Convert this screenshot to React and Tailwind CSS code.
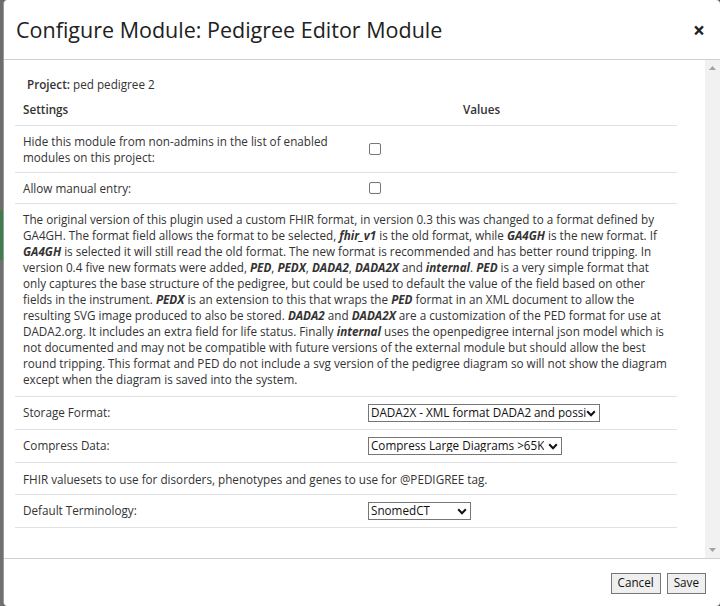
import React from "react";

const font = { fontFamily: '"Open Sans", "Liberation Sans", sans-serif' };

function Chevron() {
  return (
    <svg width="10" height="7" viewBox="0 0 10 7" className="shrink-0">
      <path d="M1.2 1.3 L5 5.2 L8.8 1.3" fill="none" stroke="#111" strokeWidth="2" />
    </svg>
  );
}

function FakeSelect({ value, width }) {
  return (
    <div
      className="flex h-[18px] items-center justify-between border border-[#767676] bg-white pl-[2px] pr-[3px] text-[11.7px] leading-none text-[#111]"
      style={{ width }}
    >
      <span className="overflow-hidden whitespace-nowrap">{value}</span>
      <Chevron />
    </div>
  );
}

function Checkbox() {
  return <div className="ml-[1px] h-[12px] w-[12px] rounded-[2px] border border-[#767676] bg-white" />;
}

function Row({ label, children }) {
  return (
    <div className="grid grid-cols-[346px_1fr] border-t border-[#dee2e6] py-[7px]">
      <div className="px-[8px] leading-[16px]">{label}</div>
      <div className="flex items-center px-[7px]">{children}</div>
    </div>
  );
}

const B = ({ children }) => <b className="font-bold italic">{children}</b>;

export default function App() {
  return (
    <div className="flex h-[606px] w-[720px] overflow-hidden bg-[#5a5a5a]" style={font}>
      <div className="flex w-[3px] flex-col">
        <div className="h-[210px] bg-[#6d6d6d]" />
        <div className="h-[50px] bg-[#3f7d4f]" />
        <div className="flex-1 bg-[#707070]" />
      </div>
      <div className="flex flex-1 flex-col overflow-hidden rounded-[4px] border-l border-[#9a9a9a] bg-white text-[#333]">
        <div className="flex h-[60px] shrink-0 items-center justify-between border-b border-[#cfcfcf] pl-[12px] pr-[15px] pt-[1px]">
          <h1 className="text-[21.5px] leading-none text-[#212121]">Configure Module: Pedigree Editor Module</h1>
          <span className="text-[21px] font-bold leading-none text-[#222]">×</span>
        </div>

        <div className="flex min-h-0 flex-1">
          <div className="flex-1 overflow-hidden pl-[11px] pr-[28px] pt-[16px] text-[11.7px]">
            <div className="pl-[12px] leading-[16px]">
              <span className="font-semibold">Project:</span> ped pedigree 2
            </div>
            <div className="grid grid-cols-[346px_1fr] pb-[8px] pt-[9px] font-semibold">
              <div className="px-[8px] leading-[16px]">Settings</div>
              <div className="pl-[102px] leading-[16px]">Values</div>
            </div>
            <Row label={<>Hide this module from non-admins in the list of enabled<br />modules on this project:</>}>
              <Checkbox />
            </Row>
            <Row label="Allow manual entry:">
              <Checkbox />
            </Row>
            <div className="border-t border-[#dee2e6] px-[8px] pb-[9px] pt-[7px] leading-[16px]">
              The original version of this plugin used a custom FHIR format, in version 0.3 this was changed to a format defined by
              GA4GH. The format field allows the format to be selected, <B>fhir_v1</B> is the old format, while <B>GA4GH</B> is the new format. If{" "}
              <B>GA4GH</B> is selected it will still read the old format. The new format is recommended and has better round tripping. In
              version 0.4 five new formats were added, <B>PED</B>, <B>PEDX</B>, <B>DADA2</B>, <B>DADA2X</B> and <B>internal</B>. <B>PED</B> is a very simple format that
              only captures the base structure of the pedigree, but could be used to default the value of the field based on other
              fields in the instrument. <B>PEDX</B> is an extension to this that wraps the <B>PED</B> format in an XML document to allow the
              resulting SVG image produced to also be stored. <B>DADA2</B> and <B>DADA2X</B> are a customization of the PED format for use at
              DADA2.org. It includes an extra field for life status. Finally <B>internal</B> uses the openpedigree internal json model which is
              not documented and may not be compatible with future versions of the external module but should allow the best
              round tripping. This format and PED do not include a svg version of the pedigree diagram so will not show the diagram
              except when the diagram is saved into the system.
            </div>
            <Row label="Storage Format:">
              <FakeSelect value="DADA2X - XML format DADA2 and possibly SVG" width={232} />
            </Row>
            <Row label="Compress Data:">
              <FakeSelect value="Compress Large Diagrams >65K" width={194} />
            </Row>
            <div className="border-t border-[#dee2e6] px-[8px] pb-[7px] pt-[8px] leading-[16px]">
              FHIR valuesets to use for disorders, phenotypes and genes to use for @PEDIGREE tag.
            </div>
            <Row label="Default Terminology:">
              <FakeSelect value="SnomedCT" width={103} />
            </Row>
            <div className="border-t border-[#dee2e6]" />
          </div>
          <div className="flex w-[15px] shrink-0 flex-col items-center justify-between bg-[#f1f1f1] py-[6px]">
            <svg width="7" height="4" viewBox="0 0 7 4"><path d="M0 4 L3.5 0 L7 4Z" fill="#a3a3a3" /></svg>
            <svg width="7" height="4" viewBox="0 0 7 4"><path d="M0 0 L3.5 4 L7 0Z" fill="#a3a3a3" /></svg>
          </div>
        </div>

        <div className="flex h-[48px] shrink-0 items-center justify-end gap-[6px] border-t border-[#cfcfcf] pr-[14px] pt-[1px]">
          <button className="h-[21px] border border-[#767676] bg-[#efefef] px-[6px] text-[11.7px] leading-none text-[#111]">Cancel</button>
          <button className="h-[21px] border border-[#767676] bg-[#efefef] px-[6px] text-[11.7px] leading-none text-[#111]">Save</button>
        </div>
      </div>
    </div>
  );
}
